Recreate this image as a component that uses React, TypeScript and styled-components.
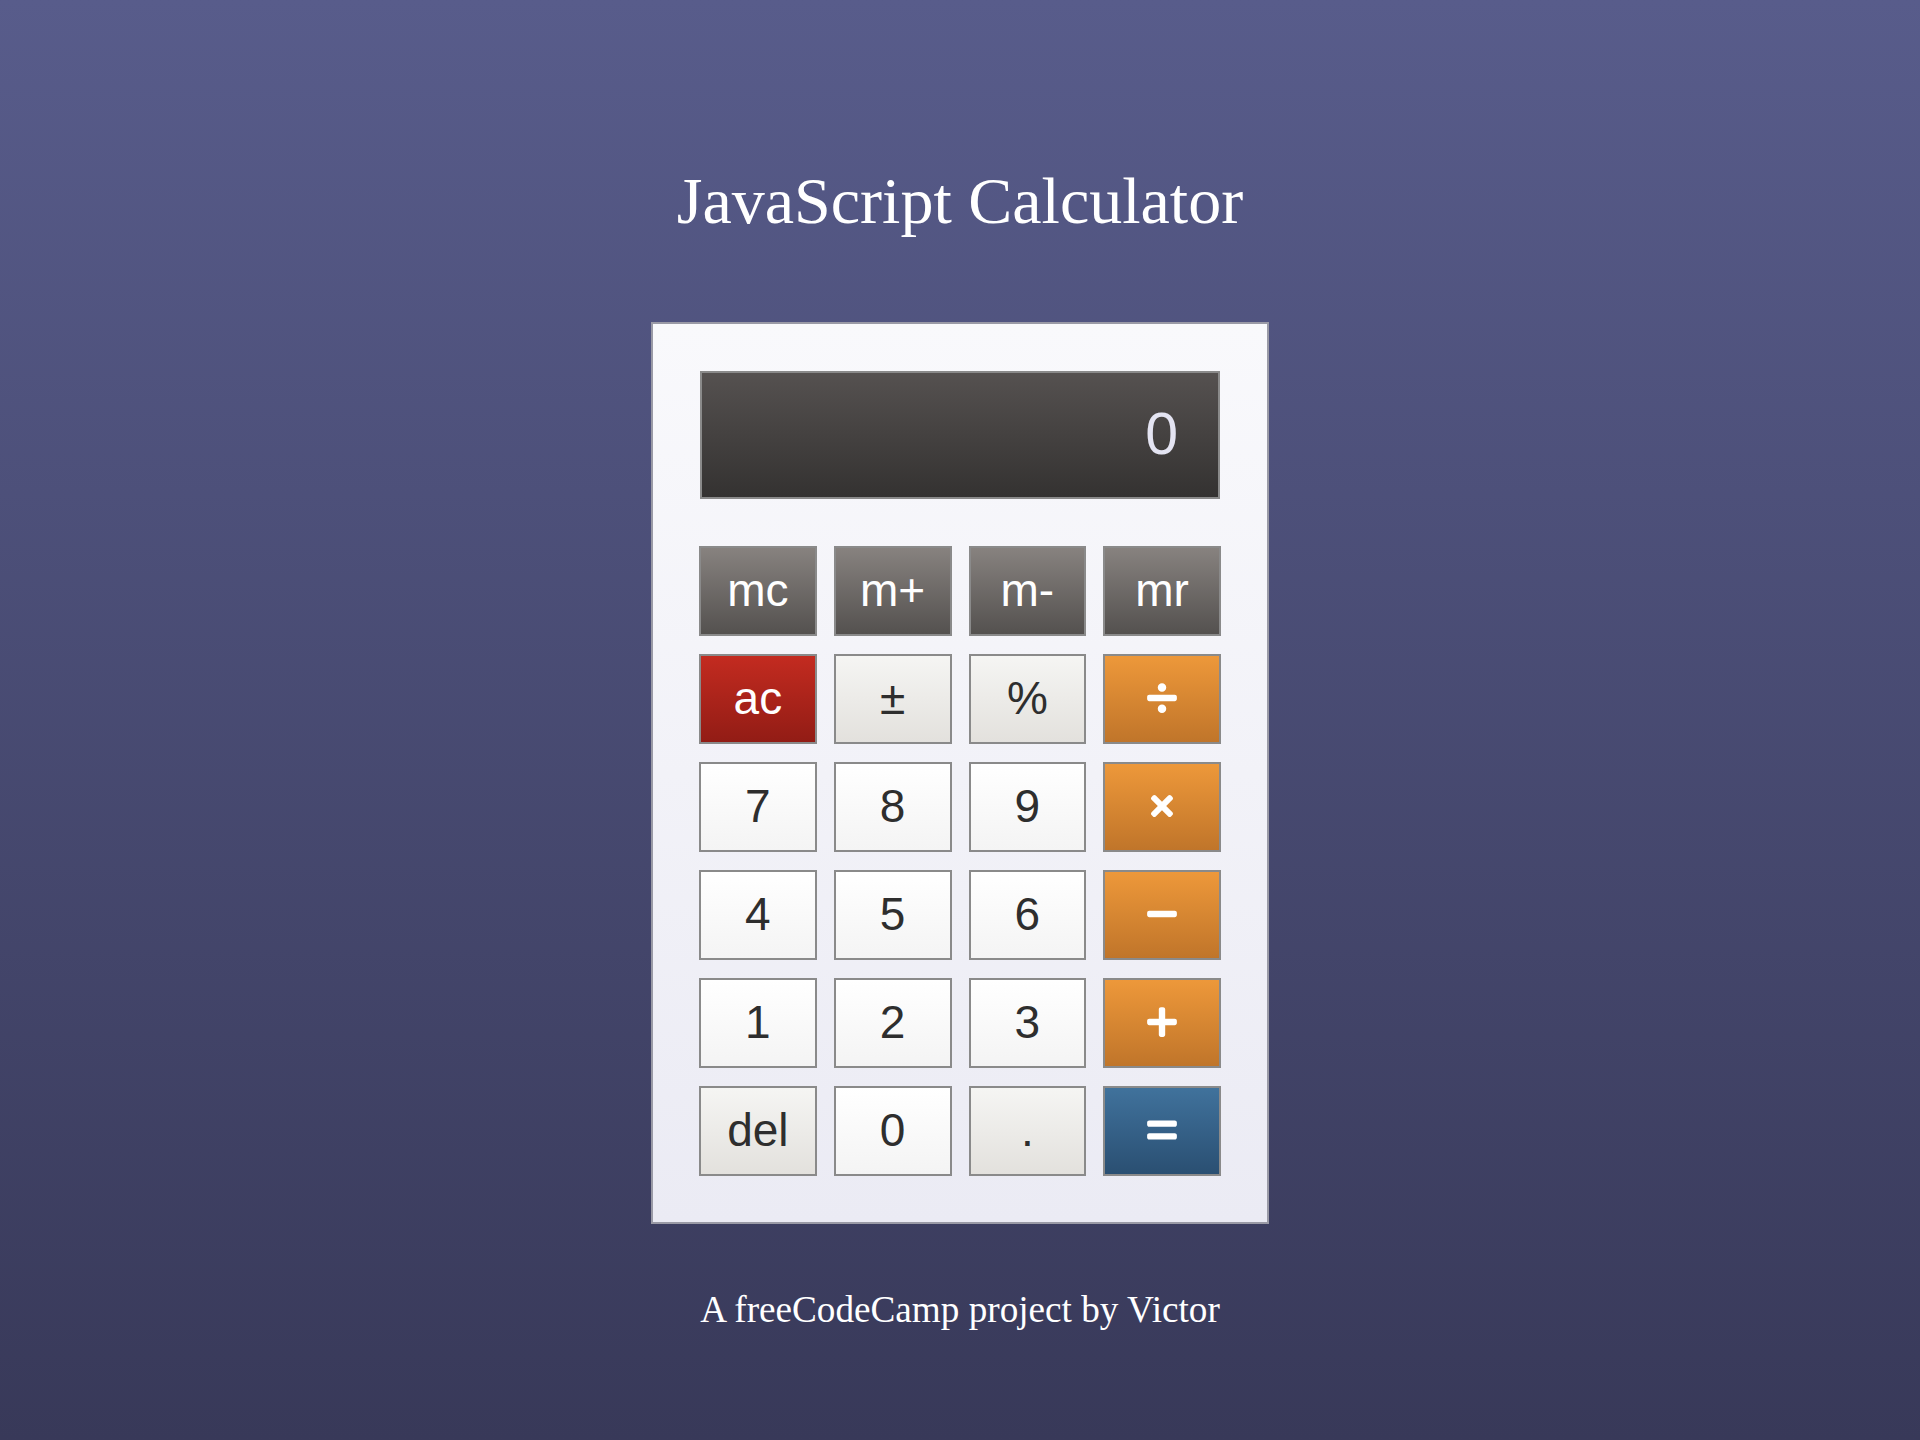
import React from 'react';
import styled, { createGlobalStyle, css } from 'styled-components';
import { FaDivide, FaTimes, FaMinus, FaPlus, FaEquals } from 'react-icons/fa';

type Kind = 'memory' | 'clear' | 'func' | 'digit' | 'op' | 'equals';

interface Key {
  label: React.ReactNode;
  kind: Kind;
}

const GlobalStyle = createGlobalStyle`
  * {
    box-sizing: border-box;
  }
  html, body {
    margin: 0;
    padding: 0;
  }
  body {
    background: linear-gradient(to bottom, #585c8b 0%, #383959 100%);
    min-height: 1440px;
    font-family: "Liberation Serif", "Times New Roman", serif;
  }
`;

const Page = styled.div`
  min-height: 1440px;
  display: flex;
  flex-direction: column;
  align-items: center;
  padding-top: 168px;
`;

const Title = styled.h1`
  margin: 0 0 88px;
  font-family: "Liberation Serif", "Times New Roman", serif;
  font-weight: normal;
  font-size: 66px;
  line-height: 1;
  color: #ffffff;
`;

const Body = styled.div`
  width: 618px;
  padding: 47px 46px 46px;
  border: 2px solid #9a9aa6;
  background: linear-gradient(to bottom, #f9f9fc 0%, #ebebf4 100%);
`;

const Display = styled.div`
  height: 128px;
  margin: 0 1px 47px;
  border: 2px solid #8a8a8a;
  background: linear-gradient(to bottom, #555150 0%, #343231 100%);
  display: flex;
  align-items: center;
  justify-content: flex-end;
  padding: 0 40px 2px;
  font-family: "Liberation Sans", Arial, sans-serif;
  font-size: 59px;
  color: #e4e4f2;
`;

const Keys = styled.div`
  display: grid;
  grid-template-columns: repeat(4, 1fr);
  grid-auto-rows: 90px;
  column-gap: 17px;
  row-gap: 18px;
`;

const kindStyles: Record<Kind, ReturnType<typeof css>> = {
  memory: css`
    background: linear-gradient(to bottom, #87827f 0%, #54514f 100%);
    color: #ffffff;
  `,
  clear: css`
    background: linear-gradient(to bottom, #c32b20 0%, #921c15 100%);
    color: #ffffff;
  `,
  func: css`
    background: linear-gradient(to bottom, #f5f5f3 0%, #e3e1dd 100%);
    color: #2e2e2e;
  `,
  digit: css`
    background: linear-gradient(to bottom, #ffffff 0%, #f4f4f4 100%);
    color: #2e2e2e;
  `,
  op: css`
    background: linear-gradient(to bottom, #ed983a 0%, #c0752a 100%);
    color: #ffffff;
  `,
  equals: css`
    background: linear-gradient(to bottom, #40729c 0%, #2a4f72 100%);
    color: #ffffff;
  `,
};

const Button = styled.button<{ $kind: Kind }>`
  display: flex;
  align-items: center;
  justify-content: center;
  padding: 0 0 3px;
  border: 2px solid #8a8a8a;
  border-radius: 0;
  font-family: "Liberation Sans", Arial, sans-serif;
  font-size: 46px;
  cursor: pointer;
  ${({ $kind }) => kindStyles[$kind]}
`;

const Footer = styled.p`
  margin: 67px 0 0;
  font-family: "Liberation Serif", "Times New Roman", serif;
  font-size: 37.2px;
  line-height: 1;
  color: #ffffff;
`;

const keys: Key[] = [
  { label: 'mc', kind: 'memory' },
  { label: 'm+', kind: 'memory' },
  { label: 'm-', kind: 'memory' },
  { label: 'mr', kind: 'memory' },
  { label: 'ac', kind: 'clear' },
  { label: '±', kind: 'func' },
  { label: '%', kind: 'func' },
  { label: <FaDivide size={34} />, kind: 'op' },
  { label: '7', kind: 'digit' },
  { label: '8', kind: 'digit' },
  { label: '9', kind: 'digit' },
  { label: <FaTimes size={32} />, kind: 'op' },
  { label: '4', kind: 'digit' },
  { label: '5', kind: 'digit' },
  { label: '6', kind: 'digit' },
  { label: <FaMinus size={34} />, kind: 'op' },
  { label: '1', kind: 'digit' },
  { label: '2', kind: 'digit' },
  { label: '3', kind: 'digit' },
  { label: <FaPlus size={34} />, kind: 'op' },
  { label: 'del', kind: 'func' },
  { label: '0', kind: 'digit' },
  { label: '.', kind: 'func' },
  { label: <FaEquals size={34} />, kind: 'equals' },
];

const App = () => {
  return (
    <>
      <GlobalStyle />
      <Page>
        <Title>JavaScript Calculator</Title>
        <Body>
          <Display>0</Display>
          <Keys>
            {keys.map((key, i) => (
              <Button key={i} $kind={key.kind}>
                {key.label}
              </Button>
            ))}
          </Keys>
        </Body>
        <Footer>A freeCodeCamp project by Victor</Footer>
      </Page>
    </>
  );
};

export default App;
